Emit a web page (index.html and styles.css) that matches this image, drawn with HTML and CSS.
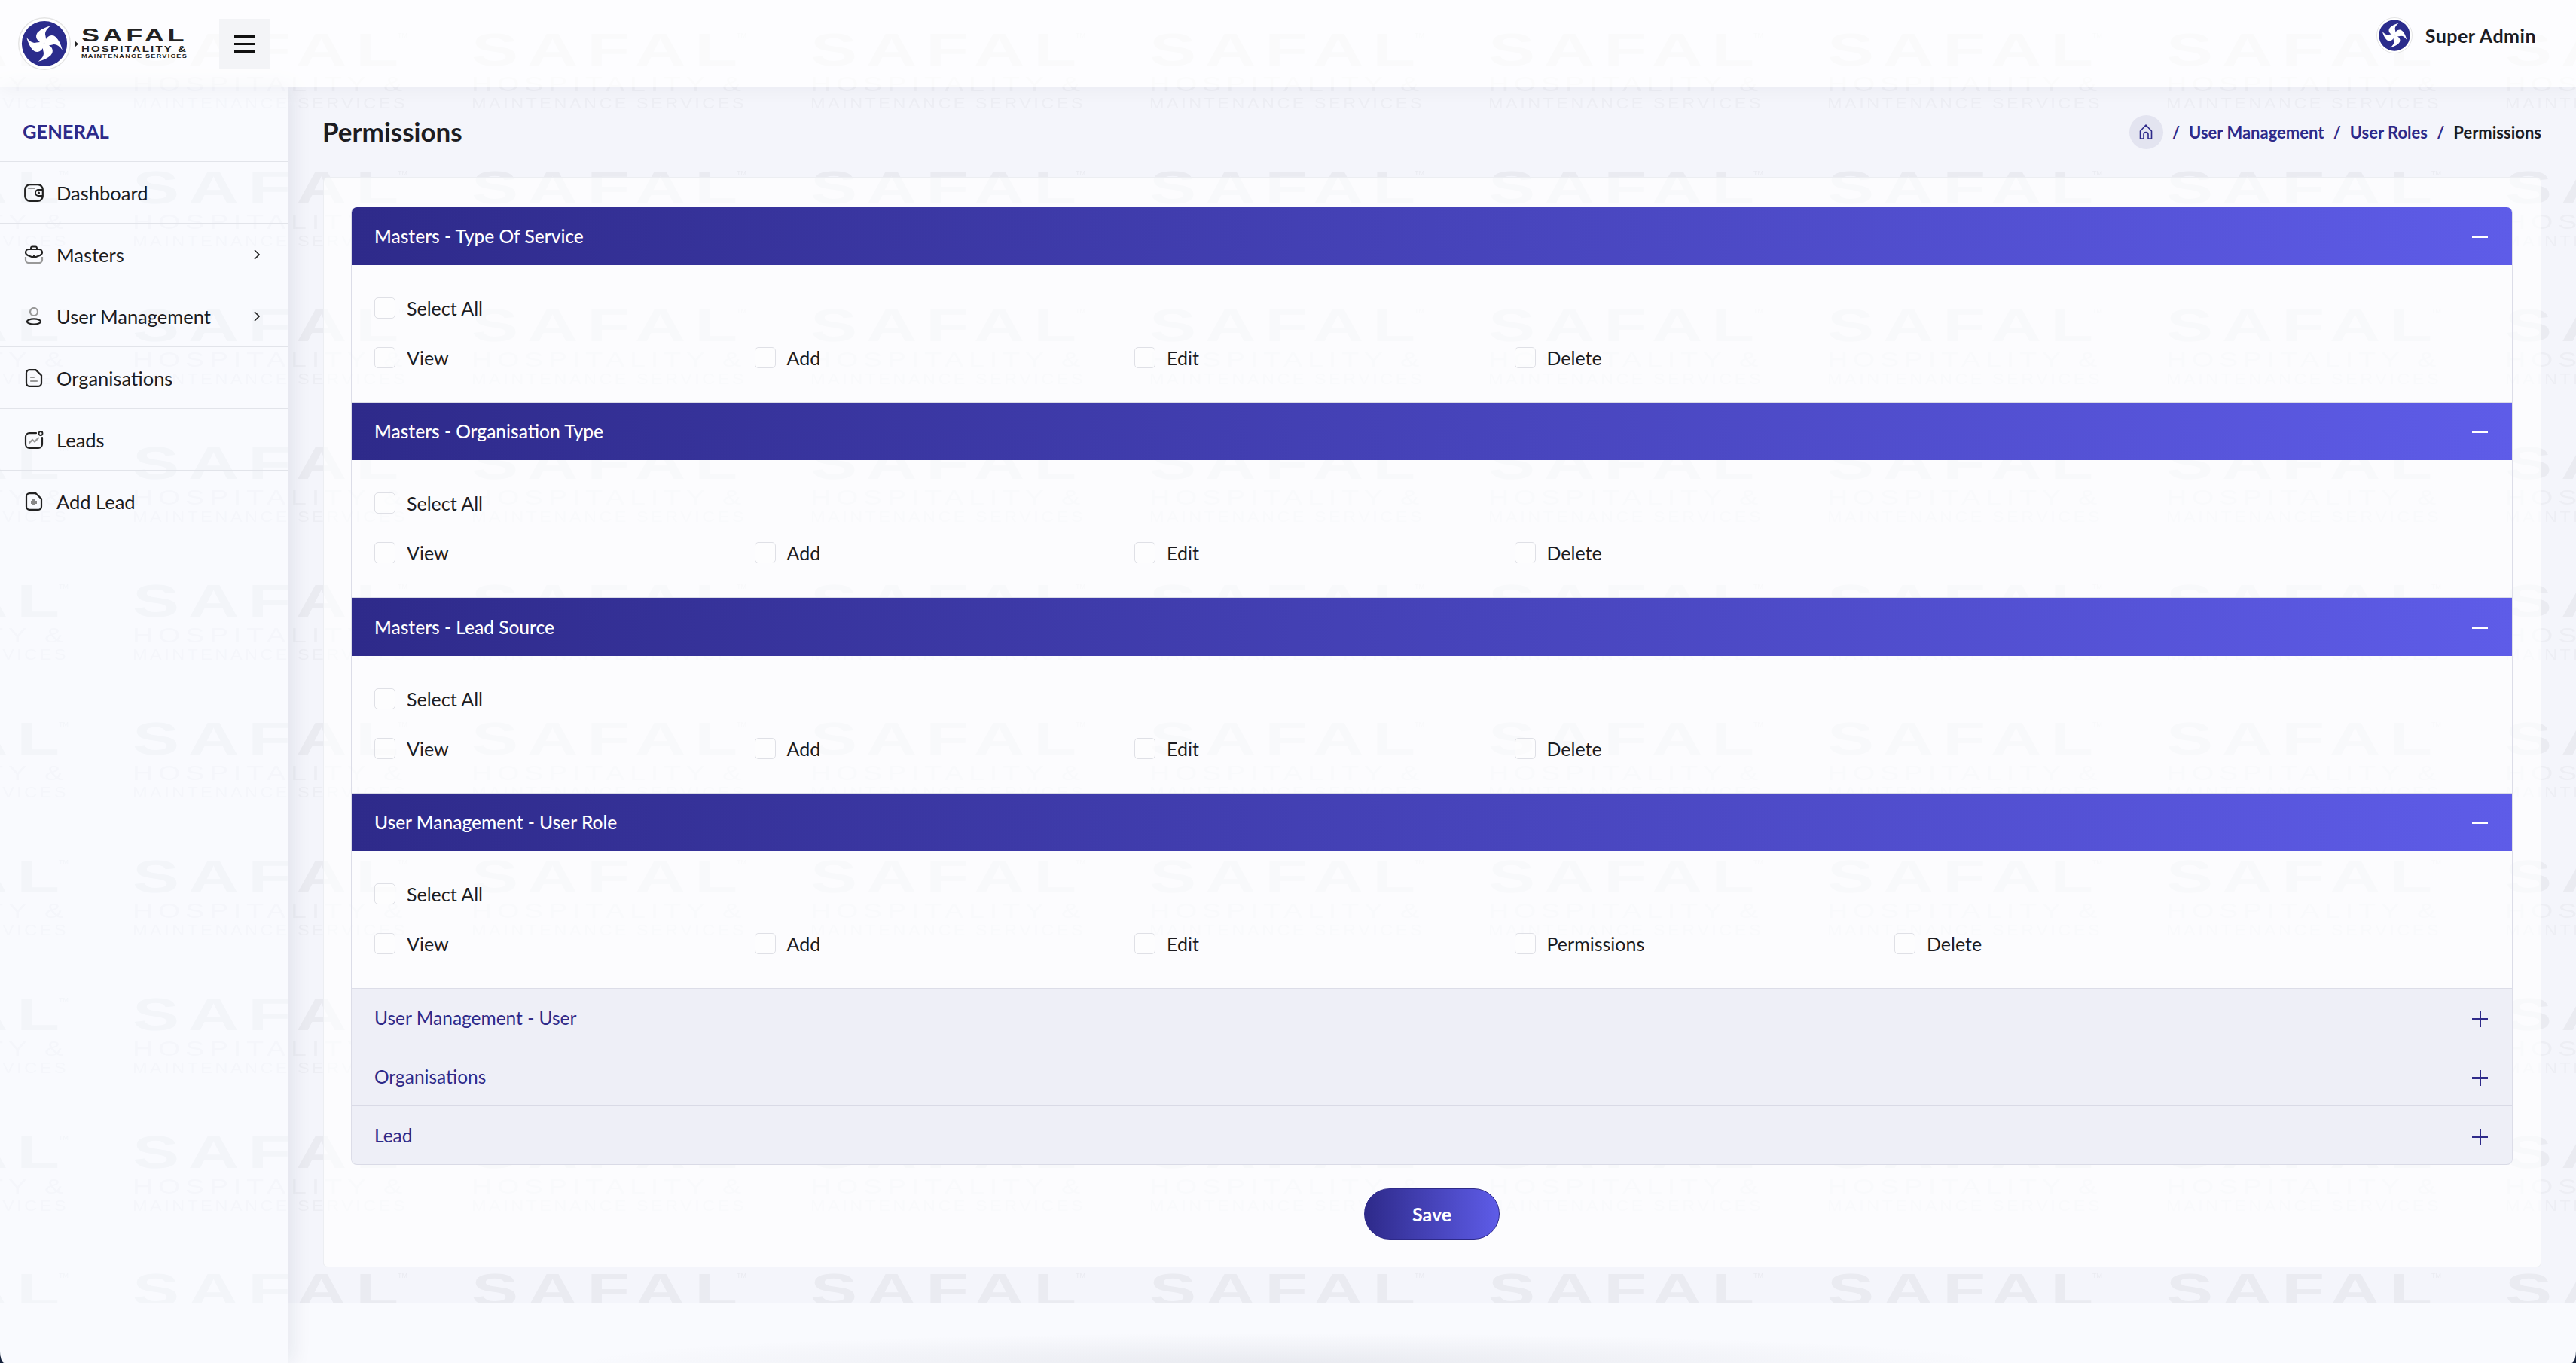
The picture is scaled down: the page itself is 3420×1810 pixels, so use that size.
FILE: index.html
```html
<!DOCTYPE html>
<html>
<head>
	<meta charset="UTF-8">
	<title>Permissions</title>
	<link rel="stylesheet" href="styles.css">
</head>
<body>

<div class="page">

	<!-- watermark behind everything -->
	<svg class="watermark" width="3420" height="1730" aria-hidden="true">
		<defs>
			<pattern id="wm" x="176" y="42" width="450" height="183" patternUnits="userSpaceOnUse">
				<text class="wm-big" x="0" y="45" textLength="365" lengthAdjust="spacingAndGlyphs">SAFAL</text>
				<text class="wm-tm" x="352" y="8">TM</text>
				<text class="wm-mid" x="0" y="79" textLength="365" lengthAdjust="spacingAndGlyphs">HOSPITALITY &amp;</text>
				<text class="wm-small" x="0" y="102" textLength="365" lengthAdjust="spacingAndGlyphs">MAINTENANCE SERVICES</text>
			</pattern>
		</defs>
		<rect width="3420" height="1730" fill="url(#wm)"></rect>
	</svg>

	<svg class="defs" width="0" height="0" aria-hidden="true">
		<symbol id="mark" viewBox="0 0 100 100">
			<circle cx="50" cy="50" r="49" fill="#ffffff" stroke="#e4e4e4" stroke-width="2"></circle>
			<circle cx="50" cy="50" r="43" fill="#2b2c8c"></circle>
			<g fill="#ffffff">
				<path id="arm" d="M50 50 C36 48 30 36 38 28 C44 22 52 19 62 16 C54 22 50 28 52 35 C53 40 54 45 50 50Z"></path>
				<use href="#arm" transform="rotate(90 50 50)"></use>
				<use href="#arm" transform="rotate(180 50 50)"></use>
				<use href="#arm" transform="rotate(270 50 50)"></use>
			</g>
		</symbol>
	</svg>

	<header class="topbar">
		<div class="topbar-left">
			<div class="logo">
				<svg class="logo-mark"><use href="#mark"></use></svg>
				<svg class="logo-words" width="152" height="50" viewBox="0 0 152 50">
					<path d="M2 24 L7 28.5 L2 33Z" fill="#222"></path>
					<text class="logo-safal" x="11" y="25" textLength="141" lengthAdjust="spacingAndGlyphs">SAFAL</text>
					<text class="logo-hosp" x="11" y="39" textLength="141" lengthAdjust="spacingAndGlyphs">HOSPITALITY &amp;</text>
					<text class="logo-maint" x="11" y="47" textLength="141" lengthAdjust="spacingAndGlyphs">MAINTENANCE SERVICES</text>
				</svg>
			</div>
			<button class="menu-btn" type="button" aria-label="Menu"><span></span><span></span><span></span></button>
		</div>
		<div class="user">
			<svg class="user-mark"><use href="#mark"></use></svg>
			<span>Super Admin</span>
		</div>
	</header>

	<div class="content">

		<aside class="sidebar">
			<div class="side-title">GENERAL</div>
			<ul class="side-menu">
				<li>
					<svg class="side-icon" viewBox="0 0 26 24" fill="none">
						<rect x="1.2" y="1.2" width="23.6" height="21.6" rx="6.5" stroke="#222" stroke-width="2.2"></rect>
						<path d="M6 6 H14" stroke="#999" stroke-width="2.2" stroke-linecap="round"></path>
						<path d="M24 8 H19 a4 4 0 0 0 0 8 H24" stroke="#222" stroke-width="2"></path>
						<circle cx="19.5" cy="12" r="1.6" fill="#222"></circle>
					</svg>
					Dashboard
				</li>
				<li>
					<svg class="side-icon" viewBox="0 0 26 24" fill="none">
						<path d="M9 5 V3.5 a2 2 0 0 1 2 -2 h4 a2 2 0 0 1 2 2 V5" stroke="#222" stroke-width="2"></path>
						<path d="M2 9 a4 4 0 0 1 4 -4 h14 a4 4 0 0 1 4 4 c0 2 -1 3 -3 4 l-5 2 h-6 l-5 -2 c-2 -1 -3 -2 -3 -4Z" stroke="#222" stroke-width="2.2"></path>
						<path d="M13 12 V16" stroke="#222" stroke-width="2.2"></path>
						<path d="M2 15 V19 a4 4 0 0 0 4 4 h14 a4 4 0 0 0 4 -4 V15" stroke="#999" stroke-width="2.2"></path>
					</svg>
					Masters
					<svg class="chev" viewBox="0 0 8 14" fill="none"><path d="M1 1 L7 7 L1 13" stroke="#222" stroke-width="1.6"></path></svg>
				</li>
				<li>
					<svg class="side-icon" viewBox="0 0 26 24" fill="none">
						<circle cx="13" cy="6" r="5" stroke="#999" stroke-width="2.2"></circle>
						<ellipse cx="13" cy="19" rx="9" ry="3.6" stroke="#222" stroke-width="2.2"></ellipse>
					</svg>
					User Management
					<svg class="chev" viewBox="0 0 8 14" fill="none"><path d="M1 1 L7 7 L1 13" stroke="#222" stroke-width="1.6"></path></svg>
				</li>
				<li>
					<svg class="side-icon" viewBox="0 0 26 24" fill="none">
						<path d="M7 1.2 H15.5 L23 8.5 V18.5 a4 4 0 0 1 -4 4.3 H7 a4 4 0 0 1 -4 -4.3 V5.5 a4 4 0 0 1 4 -4.3Z" stroke="#222" stroke-width="2.2"></path>
						<path d="M9 11 H13 M9 16 H17" stroke="#999" stroke-width="2.2" stroke-linecap="round"></path>
					</svg>
					Organisations
				</li>
				<li>
					<svg class="side-icon" viewBox="0 0 26 24" fill="none">
						<path d="M16 3.2 H7 A5 5 0 0 0 2 8 V18 a5 5 0 0 0 5 4.8 H19 a5 5 0 0 0 5 -4.8 V9" stroke="#222" stroke-width="2.2" stroke-linecap="round"></path>
						<circle cx="22" cy="3.5" r="2.5" stroke="#222" stroke-width="1.8"></circle>
						<path d="M7 16 L11 12 L14 14.5 L19 9.5" stroke="#999" stroke-width="2.2" stroke-linecap="round"></path>
					</svg>
					Leads
				</li>
				<li>
					<svg class="side-icon" viewBox="0 0 26 24" fill="none">
						<path d="M7 1.2 H15.5 L23 8.5 V18.5 a4 4 0 0 1 -4 4.3 H7 a4 4 0 0 1 -4 -4.3 V5.5 a4 4 0 0 1 4 -4.3Z" stroke="#222" stroke-width="2.2"></path>
						<path d="M13 9 V17 M9 13 H17" stroke="#888" stroke-width="4"></path>
					</svg>
					Add Lead
				</li>
			</ul>
		</aside>

		<main class="main">
			<div class="title-row">
				<h1>Permissions</h1>
				<nav class="crumbs">
					<span class="home">
						<svg width="18" height="22" viewBox="0 0 18 22" fill="none"><path d="M1.5 20 V10 L9 2 L16.5 10 V20 H12 V14.5 a3 3 0 0 0 -6 0 V20Z" stroke="#2e2a8a" stroke-width="1.6" stroke-linejoin="round"></path></svg>
					</span>
					<span class="sep">/</span>
					<a href="#">User Management</a>
					<span class="sep">/</span>
					<a href="#">User Roles</a>
					<span class="sep">/</span>
					<span class="crumb-now">Permissions</span>
				</nav>
			</div>

			<section class="card">
				<div class="accordion">

					<div class="acc-item">
						<div class="acc-head">Masters - Type Of Service<i class="minus"></i></div>
						<div class="acc-body">
							<label class="check"><input type="checkbox">Select All</label>
							<div class="perm-row">
								<label class="check"><input type="checkbox">View</label>
								<label class="check"><input type="checkbox">Add</label>
								<label class="check"><input type="checkbox">Edit</label>
								<label class="check"><input type="checkbox">Delete</label>
							</div>
						</div>
					</div>

					<div class="acc-item">
						<div class="acc-head">Masters - Organisation Type<i class="minus"></i></div>
						<div class="acc-body">
							<label class="check"><input type="checkbox">Select All</label>
							<div class="perm-row">
								<label class="check"><input type="checkbox">View</label>
								<label class="check"><input type="checkbox">Add</label>
								<label class="check"><input type="checkbox">Edit</label>
								<label class="check"><input type="checkbox">Delete</label>
							</div>
						</div>
					</div>

					<div class="acc-item">
						<div class="acc-head">Masters - Lead Source<i class="minus"></i></div>
						<div class="acc-body">
							<label class="check"><input type="checkbox">Select All</label>
							<div class="perm-row">
								<label class="check"><input type="checkbox">View</label>
								<label class="check"><input type="checkbox">Add</label>
								<label class="check"><input type="checkbox">Edit</label>
								<label class="check"><input type="checkbox">Delete</label>
							</div>
						</div>
					</div>

					<div class="acc-item">
						<div class="acc-head">User Management - User Role<i class="minus"></i></div>
						<div class="acc-body">
							<label class="check"><input type="checkbox">Select All</label>
							<div class="perm-row">
								<label class="check"><input type="checkbox">View</label>
								<label class="check"><input type="checkbox">Add</label>
								<label class="check"><input type="checkbox">Edit</label>
								<label class="check"><input type="checkbox">Permissions</label>
								<label class="check"><input type="checkbox">Delete</label>
							</div>
						</div>
					</div>

					<div class="acc-closed">User Management - User<i class="plus"></i></div>
					<div class="acc-closed">Organisations<i class="plus"></i></div>
					<div class="acc-closed acc-last">Lead<i class="plus"></i></div>
				</div>

				<div class="save-row">
					<button class="save" type="button">Save</button>
				</div>
			</section>
		</main>
	</div>

	<div class="foot"></div>
</div>

</body>
</html>
```

FILE: styles.css
```css
html, body {
	height: 100%;
	margin: 0;
	overflow: hidden;
	background-color: #14203a;
}

.page {
	position: relative;
	display: flex;
	flex-direction: column;
	width: 3420px;
	height: 1810px;
	background-color: #f9fafe;
	border-radius: 0 0 6px 6px / 0 0 16px 16px;
	overflow: hidden;
	font-family: "Lato", "Noto Sans", sans-serif;
	font-size: 25px;
	color: #1c1c22;
}

/* watermark */
.watermark {
	position: absolute;
	top: 0;
	left: 0;
}

.watermark text {
	font-family: "Liberation Sans", sans-serif;
	font-weight: 700;
	fill: #eff0f4;
}

.wm-big { font-size: 62px; letter-spacing: 8px; }
.watermark .wm-mid { font-size: 28px; letter-spacing: 5px; font-weight: 400; fill: #f2f3f7; }
.watermark .wm-small { font-size: 20px; letter-spacing: 3px; font-weight: 400; fill: #f2f3f7; }
.watermark .wm-tm { font-size: 9px; font-weight: 400; }

.defs {
	position: absolute;
}

/* top bar */
.topbar {
	position: relative;
	z-index: 2;
	display: flex;
	justify-content: space-between;
	align-items: flex-start;
	height: 115px;
	flex-shrink: 0;
	background-color: rgba(255, 255, 255, 0.65);
	box-shadow: 0 6px 22px rgba(20, 30, 60, 0.04);
}

.topbar-left {
	display: flex;
	align-items: center;
	height: 68px;
	margin-top: 24px;
	padding-left: 24px;
}

.logo {
	display: flex;
	align-items: flex-start;
	width: 267px;
}

.logo-mark {
	width: 70px;
	height: 70px;
}

.logo-words {
	margin-left: 3px;
	margin-top: 7px;
}

.logo-words text {
	font-family: "Liberation Sans", sans-serif;
	fill: #222;
}

.logo-safal { font-size: 24px; font-weight: 700; letter-spacing: 3px; }
.logo-hosp { font-size: 10.5px; letter-spacing: 1.5px; font-weight: 700; fill: #333; }
.logo-maint { font-size: 7.5px; letter-spacing: 1px; font-weight: 700; }

.menu-btn {
	display: flex;
	flex-direction: column;
	justify-content: center;
	gap: 7px;
	align-items: center;
	width: 67px;
	height: 67px;
	padding: 0;
	border: 0;
	background-color: #f3f4f7;
}

.menu-btn span {
	display: block;
	width: 27px;
	height: 3px;
	background-color: #111;
}

.user {
	display: flex;
	align-items: center;
	gap: 17px;
	margin-top: 23px;
	padding-right: 53px;
	font-weight: 700;
	letter-spacing: 0.5px;
}

.user-mark {
	width: 48px;
	height: 48px;
}

/* below the bar */
.content {
	display: flex;
	flex: 1;
	min-height: 0;
	position: relative;
	z-index: 1;
}

.sidebar {
	position: relative;
	z-index: 1;
	width: 383px;
	flex-shrink: 0;
	font-size: 25.5px;
	background-color: rgba(249, 250, 254, 0.45);
	box-shadow: 4px 0 26px rgba(20, 30, 70, 0.09);
}

.side-title {
	height: 100px;
	box-sizing: border-box;
	padding: 41px 0 0 30px;
	line-height: 36px;
	font-weight: 700;
	color: #2e2a8a;
	border-bottom: 1px solid #e2e4ea;
}

.side-menu {
	list-style-type: none;
	margin: 0;
	padding: 0;
}

.side-menu li {
	display: flex;
	align-items: center;
	gap: 17px;
	height: 82px;
	box-sizing: border-box;
	padding-left: 32px;
	border-bottom: 1px solid #e2e4ea;
}

.side-menu li:last-child {
	border-bottom: 0;
}

.side-icon {
	width: 26px;
	height: 24px;
	flex-shrink: 0;
}

.chev {
	width: 8px;
	height: 14px;
	margin-left: auto;
	margin-right: 38px;
}

.main {
	flex: 1;
	height: 1615px;
	box-sizing: border-box;
	padding: 0 46px;
	background-color: rgba(10, 20, 90, 0.018);
}

.title-row {
	display: flex;
	justify-content: space-between;
	align-items: center;
	height: 120px;
}

h1 {
	margin: -2px 0 0 -1px;
	font-size: 35px;
	font-weight: 700;
	color: #1c1c22;
}

.crumbs {
	display: flex;
	align-items: center;
	gap: 12px;
	font-size: 22px;
	font-weight: 700;
}

.crumbs a {
	color: #2e2a8a;
	text-decoration: none;
}

.sep {
	color: #2e2a8a;
}

.home {
	display: flex;
	align-items: center;
	justify-content: center;
	width: 45px;
	height: 45px;
	border-radius: 50%;
	background-color: #e3e4f0;
}

.card {
	height: 1448px;
	box-sizing: border-box;
	padding: 39px 37px 0 36px;
	background-color: rgba(255, 255, 255, 0.68);
	border: 1px solid #eceef2;
	border-radius: 6px;
}

.accordion {
	border-left: 1px solid #dcdde8;
	border-right: 1px solid #dcdde8;
	border-radius: 8px;
}

.acc-head {
	display: flex;
	justify-content: space-between;
	align-items: center;
	height: 76.5px;
	box-sizing: border-box;
	padding: 0 32px 0 30px;
	font-size: 24.5px;
	color: #ffffff;
	font-weight: 500;
	background: linear-gradient(90deg, #2e2a8a, #5e5ce8);
}

.acc-item:first-child .acc-head {
	border-radius: 7px 7px 0 0;
}

.minus {
	width: 21px;
	height: 3px;
	margin-top: 2px;
	background-color: #ffffff;
}

.acc-body {
	height: 183px;
	box-sizing: border-box;
	padding: 43px 30px 0;
	border-bottom: 1px solid #dcdde8;
}

.perm-row {
	display: grid;
	grid-template-columns: repeat(5, 504.5px);
	margin-top: 38px;
}

.check {
	display: flex;
	align-items: center;
	gap: 15px;
	height: 28px;
}

.check input {
	appearance: none;
	width: 28px;
	height: 28px;
	margin: 0;
	background-color: rgba(255, 255, 255, 0.4);
	border: 1px solid #dfe0e6;
	border-radius: 5px;
}

.acc-closed {
	display: flex;
	justify-content: space-between;
	align-items: center;
	height: 78px;
	box-sizing: border-box;
	padding: 0 32px 0 30px;
	font-size: 24.5px;
	color: #2e2a8a;
	background-color: #eeeff7;
	border-bottom: 1px solid #d9dae6;
}

.acc-last {
	border-radius: 0 0 7px 7px;
}

.plus {
	width: 21px;
	height: 21px;
	margin-top: 3px;
	background:
		linear-gradient(#2e2a8a, #2e2a8a) center / 21px 3px no-repeat,
		linear-gradient(#2e2a8a, #2e2a8a) center / 2px 21px no-repeat;
}

.save-row {
	display: flex;
	justify-content: center;
	margin-top: 31px;
}

.save {
	width: 180px;
	height: 68px;
	font-family: inherit;
	font-size: 25px;
	font-weight: 700;
	color: #ffffff;
	border: 1px solid #2e2a8a;
	border-radius: 34px;
	background: linear-gradient(90deg, #2e2a8a, #5e5ce8);
}

.foot {
	position: absolute;
	left: 0;
	right: 0;
	bottom: 0;
	height: 60px;
	background: radial-gradient(ellipse 950px 40px at 50% 100%, rgba(20, 30, 60, 0.07), transparent);
}
```
